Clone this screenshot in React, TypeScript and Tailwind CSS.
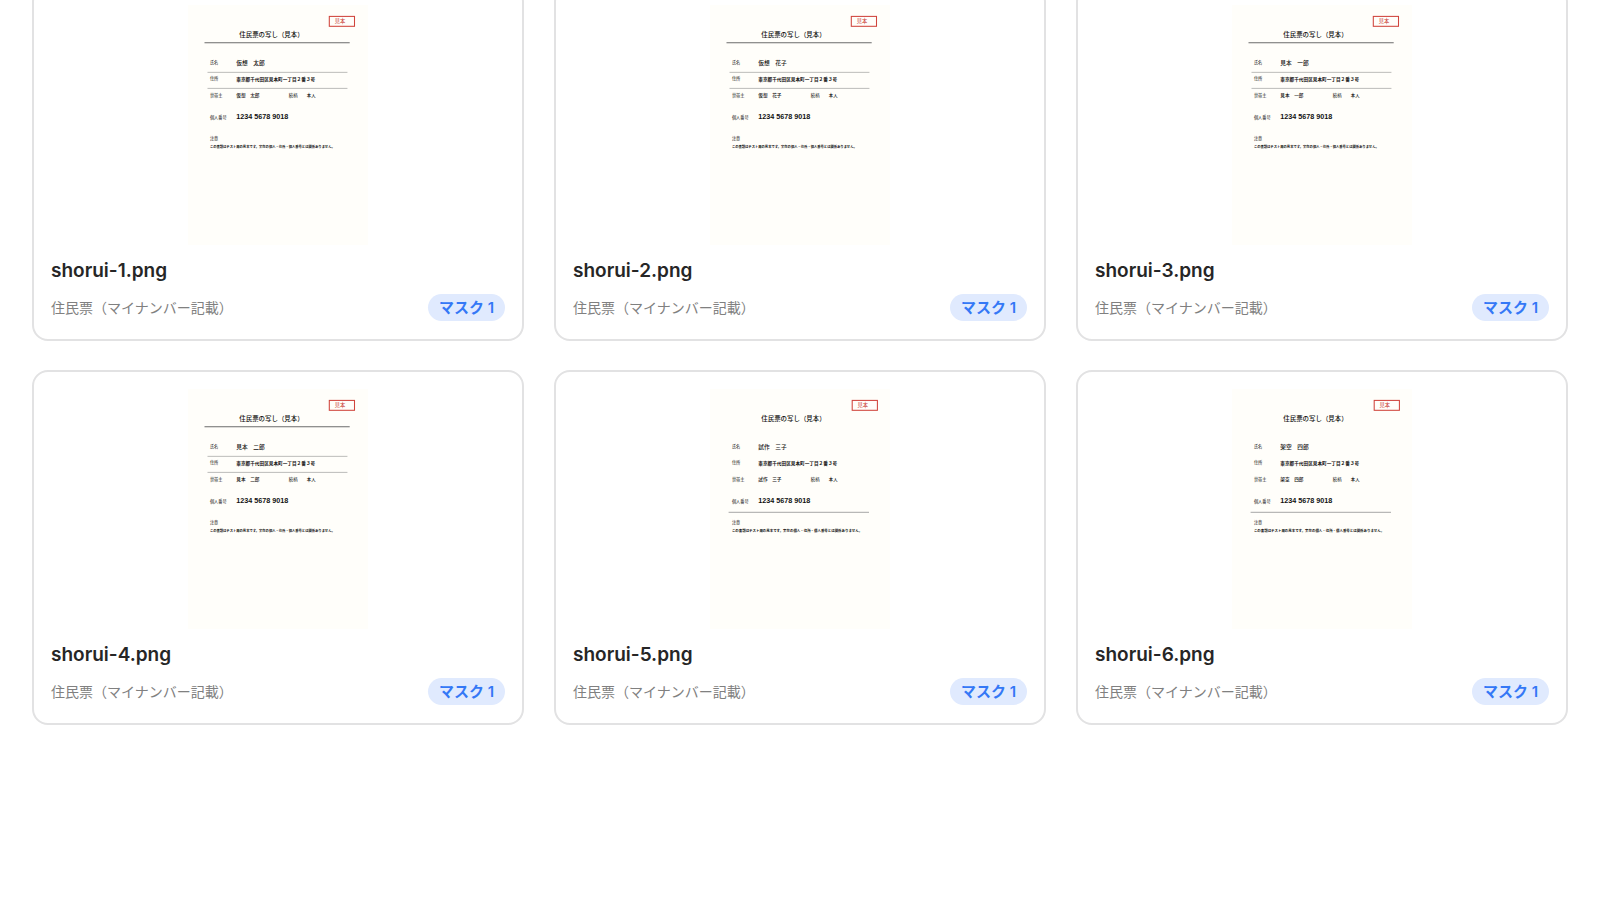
type Variant = "ruled" | "plain"

type Shorui = {
  file: string
  name: string
  variant: Variant
}

const items: Shorui[] = [
  { file: "shorui-1.png", name: "仮想　太郎", variant: "ruled" },
  { file: "shorui-2.png", name: "仮想　花子", variant: "ruled" },
  { file: "shorui-3.png", name: "見本　一郎", variant: "ruled" },
  { file: "shorui-4.png", name: "見本　二郎", variant: "ruled" },
  { file: "shorui-5.png", name: "試作　三子", variant: "plain" },
  { file: "shorui-6.png", name: "架空　四郎", variant: "plain" },
]

// Thumbnail of the scanned certificate
function Thumbnail({ name, variant }: { name: string; variant: Variant }) {
  const ruled = variant === "ruled"

  return (
    <svg
      viewBox="0 0 1200 1600"
      className="mx-auto block h-60 w-[180px] font-['Noto_Sans_CJK_JP',sans-serif]"
      fill="#111111"
      role="img"
    >
      <rect width="1200" height="1600" fill="#fffefa" />
      <rect x={ruled ? 942 : 948} y="76" width="168" height="66" fill="none" stroke="#d0443c" strokeWidth="7" />
      <text x={ruled ? 978 : 984} y="121" fontSize="35" fill="#c8382f">見本</text>
      <text x="342" y="212" fontSize="43" fontWeight="500">住民票の写し（見本）</text>
      {ruled && <path d="M110 251H1078" stroke="#6b6b6b" strokeWidth="7" />}

      <text x="146" y="396" fontSize="28">氏名</text>
      <text x="322" y="401" fontSize="38" fontWeight="500">{name}</text>
      {ruled && <path d="M130 449H1063" stroke="#b4b4b2" strokeWidth="6" />}

      <text x="146" y="503" fontSize="28">住所</text>
      <text x="322" y="505" fontSize="31" fontWeight="700">東京都千代田区見本町一丁目２番３号</text>
      {ruled && <path d="M130 556H1063" stroke="#b4b4b2" strokeWidth="6" />}

      <text x="146" y="611" fontSize="28">世帯主</text>
      <text x="322" y="613" fontSize="31" fontWeight="500">{name}</text>
      <text x="672" y="611" fontSize="29">続柄</text>
      <text x="792" y="611" fontSize="29" fontWeight="500">本人</text>

      <text x="146" y="757" fontSize="28">個人番号</text>
      <text x="322" y="760" fontSize="48" fontWeight="700" className="font-['Liberation_Sans',sans-serif]">
        1234 5678 9018
      </text>
      {!ruled && <path d="M124 822H1060" stroke="#9c9c9c" strokeWidth="6" />}

      <text x="146" y="902" fontSize="28">注意</text>
      <text x="146" y="956" fontSize={ruled ? 22 : 23} fontWeight="700">
        この書類はテスト用の見本です。実在の個人・住所・個人番号とは関係ありません。
      </text>
    </svg>
  )
}

function ShoruiCard({ item }: { item: Shorui }) {
  return (
    <li className="rounded-2xl border-2 border-[#e2e2e3] bg-white px-[17px] pt-[17px] pb-[18px]">
      <Thumbnail name={item.name} variant={item.variant} />
      <h2 className="mt-[11px] text-[19px] leading-[30px] font-semibold text-[#262626]">{item.file}</h2>
      <div className="mt-2 flex items-center justify-between">
        <p className="text-[14px] leading-[27px] text-[#808080]">住民票（マイナンバー記載）</p>
        <span className="rounded-full bg-[#e0eafe] px-[11px] text-[15px] leading-[27px] font-semibold text-[#3478f6]">
          マスク 1
        </span>
      </div>
    </li>
  )
}

export default function App() {
  return (
    <main className="min-h-screen overflow-hidden bg-white px-8 font-['Inter','Noto_Sans_CJK_JP',sans-serif]">
      {/* first row runs past the top edge, as in a scrolled list */}
      <ul className="-mt-[14px] grid grid-cols-3 gap-x-[30px] gap-y-[29px]">
        {items.map((item) => (
          <ShoruiCard key={item.file} item={item} />
        ))}
      </ul>
    </main>
  )
}
